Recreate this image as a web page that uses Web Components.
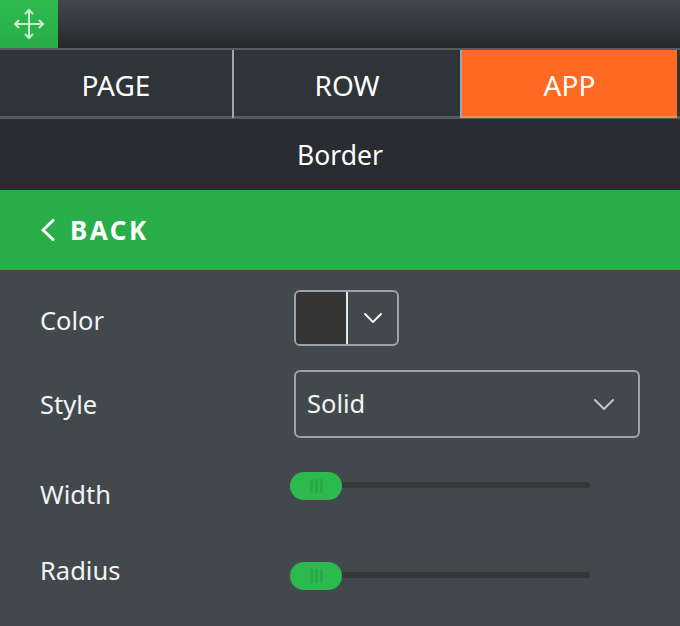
<!DOCTYPE html>
<html>
<head>
<meta charset="utf-8">
<style>
  html, body { margin: 0; height: 100%; }
  body { background: #42494d; font-family: "Noto Sans", sans-serif; color: #fff; overflow: hidden; }
</style>
</head>
<body>
<app-panel></app-panel>
<script>
class TopBar extends HTMLElement {
  constructor () {
    super()
    this.attachShadow({ mode: 'open' }).innerHTML = `
      <style>
        :host { display: block; height: 48px; background: linear-gradient(#43474e, #26282b); }
        #move { width: 58px; height: 50px; box-sizing: border-box; background: linear-gradient(#2dbb4f, #29ae4a); border-bottom: 2px solid #4fc46c; display: flex; align-items: center; justify-content: center; }
        svg { display: block; }
      </style>
      <div id="move">
        <svg width="32" height="34" viewBox="0 0 32 34" fill="none" stroke="#c8eed2" stroke-width="2" stroke-linecap="round" stroke-linejoin="round">
          <path d="M16 3V31M2 17H30"/>
          <path d="M12.500 6.500 16 3l3.500 3.500M12.500 27.500 16 31l3.500-3.500M5.500 13.500 2 17l3.500 3.500M26.500 13.500 30 17l-3.500 3.500"/>
        </svg>
      </div>`
  }
}
customElements.define('top-bar', TopBar)

class TabBar extends HTMLElement {
  constructor () {
    super()
    this.attachShadow({ mode: 'open' }).innerHTML = `
      <style>
        :host { display: grid; grid-template-columns: 234px 228px 1fr; height: 71px; box-sizing: border-box; background: #2f3438; border-top: 2px solid #565b60; border-bottom: 3px solid #565b60; }
      </style>
      <slot></slot>`
  }
}
customElements.define('tab-bar', TabBar)

class TabItem extends HTMLElement {
  constructor () {
    super()
    this.attachShadow({ mode: 'open' }).innerHTML = `
      <style>
        :host { display: flex; align-items: center; justify-content: center; padding-top: 2px; margin-bottom: -2px; font-size: 28px; color: #fff; border-right: 2px solid #a3a6a8; }
        :host([last]) { border-right: 0; }
        :host([active]) { background: #ff6a22; margin-right: 3px; box-shadow: inset 0 -2px 0 #f28a5c; }
      </style>
      <slot></slot>`
  }
}
customElements.define('tab-item', TabItem)

class TitleBar extends HTMLElement {
  constructor () {
    super()
    this.attachShadow({ mode: 'open' }).innerHTML = `
      <style>
        :host { display: flex; align-items: center; justify-content: center; height: 71px; padding-top: 1px; box-sizing: border-box; background: #292c30; font-size: 26.500px; }
      </style>
      <slot></slot>`
  }
}
customElements.define('title-bar', TitleBar)

class BackBar extends HTMLElement {
  constructor () {
    super()
    this.attachShadow({ mode: 'open' }).innerHTML = `
      <style>
        :host { display: flex; align-items: center; gap: 15px; height: 80px; padding-left: 41px; background: #29ae4a; font-size: 26px; font-weight: 700; letter-spacing: 2.500px; }
        svg { display: block; }
      </style>
      <svg width="14" height="22" viewBox="0 0 14 22" fill="none" stroke="#fff" stroke-width="3" stroke-linecap="round" stroke-linejoin="round"><path d="M12 1.500 2 11l10 9.500"/></svg>
      <span><slot></slot></span>`
  }
}
customElements.define('back-bar', BackBar)

// labels sit at their own height in each row, --drop sets it
class FieldRow extends HTMLElement {
  constructor () {
    super()
    this.attachShadow({ mode: 'open' }).innerHTML = `
      <style>
        :host { display: grid; grid-template-columns: 254px 346px; align-items: start; padding-left: 40px; font-size: 25.500px; line-height: 34px; color: #f2f3f3; }
        #label { margin-top: var(--drop, 0); }
      </style>
      <span id="label"><slot name="label"></slot></span>
      <div><slot></slot></div>`
  }
}
customElements.define('field-row', FieldRow)

class ColorPick extends HTMLElement {
  constructor () {
    super()
    this.attachShadow({ mode: 'open' }).innerHTML = `
      <style>
        :host { display: flex; width: 105px; height: 56px; box-sizing: border-box; border: 2px solid #a0a3a5; border-radius: 6px; overflow: hidden; }
        #swatch { width: 50px; background: #353535; border-right: 2px solid #e6e6e6; }
        #arrow { flex: 1; display: flex; align-items: center; justify-content: center; }
      </style>
      <div id="swatch"></div>
      <div id="arrow">
        <svg width="18" height="10" viewBox="0 0 18 10" fill="none" stroke="#fff" stroke-width="1.800" stroke-linecap="round" stroke-linejoin="round"><path d="M1 1l8 8 8-8"/></svg>
      </div>`
  }
}
customElements.define('color-pick', ColorPick)

class SelectBox extends HTMLElement {
  constructor () {
    super()
    this.attachShadow({ mode: 'open' }).innerHTML = `
      <style>
        :host { display: flex; align-items: center; justify-content: space-between; width: 346px; height: 68px; box-sizing: border-box; padding: 0 24px 2px 11px; border: 2px solid #a0a3a5; border-radius: 6px; }
        svg { margin-top: 2px; }
      </style>
      <span><slot></slot></span>
      <svg width="20" height="11" viewBox="0 0 20 11" fill="none" stroke="#c4c6c8" stroke-width="2" stroke-linecap="round" stroke-linejoin="round"><path d="M1 1l9 9 9-9"/></svg>`
  }
}
customElements.define('select-box', SelectBox)

class RangeSlider extends HTMLElement {
  constructor () {
    super()
    this.attachShadow({ mode: 'open' }).innerHTML = `
      <style>
        :host { display: flex; align-items: center; width: 300px; height: 28px; margin-left: -4px; }
        #thumb { width: 52px; height: 28px; margin-top: 1px; border-radius: 14px; background: #2cba4e; display: flex; align-items: center; justify-content: center; gap: 2px; flex: none; }
        #thumb i { width: 3px; height: 14px; background: #2aa94b; }
        #track { flex: 1; height: 6px; background: #33383b; border-radius: 0 3px 3px 0; }
      </style>
      <div id="thumb"><i></i><i></i><i></i></div>
      <div id="track"></div>`
  }
}
customElements.define('range-slider', RangeSlider)

class AppPanel extends HTMLElement {
  constructor () {
    super()
    this.attachShadow({ mode: 'open' }).innerHTML = `
      <style>
        :host { display: block; width: 680px; height: 626px; overflow: hidden; }
        #fields { display: flex; flex-direction: column; padding-top: 20px; }
        field-row { height: 28px; }
        #color { height: 56px; margin-bottom: 24px; --drop: 13px; }
        #style { height: 68px; margin-bottom: 33px; --drop: 17px; }
        #width { margin-bottom: 62px; --drop: 6px; }
        #radius { --drop: -8px; }
      </style>
      <top-bar></top-bar>
      <tab-bar>
        <tab-item>PAGE</tab-item>
        <tab-item>ROW</tab-item>
        <tab-item active last>APP</tab-item>
      </tab-bar>
      <title-bar>Border</title-bar>
      <back-bar>BACK</back-bar>
      <div id="fields">
        <field-row id="color"><span slot="label">Color</span><color-pick></color-pick></field-row>
        <field-row id="style"><span slot="label">Style</span><select-box>Solid</select-box></field-row>
        <field-row id="width"><span slot="label">Width</span><range-slider></range-slider></field-row>
        <field-row id="radius"><span slot="label">Radius</span><range-slider></range-slider></field-row>
      </div>`
  }
}
customElements.define('app-panel', AppPanel)
</script>
</body>
</html>
